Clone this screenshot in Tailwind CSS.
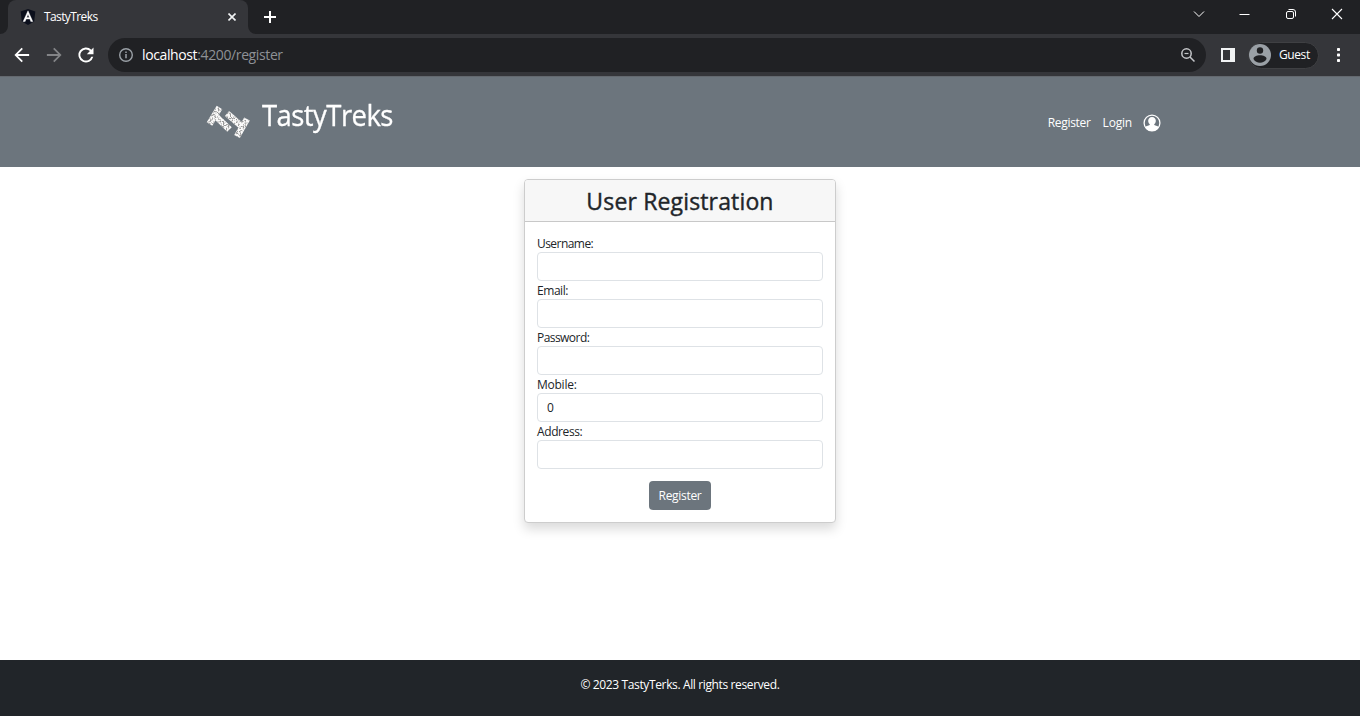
<!DOCTYPE html>
<html lang="en">
<head>
<meta charset="utf-8">
<title>TastyTreks</title>
<script src="https://cdn.jsdelivr.net/npm/@tailwindcss/browser@4"></script>
</head>
<body class="flex h-[716px] w-[1360px] flex-col overflow-hidden bg-white font-['Open_Sans','Noto_Sans',sans-serif] text-[12px] leading-[18px] text-[#212529]">
  <div class="flex h-[34px] shrink-0 bg-[#202124] text-white">
    <div class="relative ml-2 flex w-60 items-center rounded-t-lg bg-[#35363a] pl-3 pr-2.5">
      <svg class="absolute -left-2 bottom-0 size-2" viewBox="0 0 8 8"><path d="M8 0v8H0a8 8 0 0 0 8-8" fill="#35363a"/></svg>
      <svg class="absolute -right-2 bottom-0 size-2" viewBox="0 0 8 8"><path d="M0 0v8h8a8 8 0 0 1-8-8" fill="#35363a"/></svg>
      <svg class="size-4" viewBox="0 0 16 16"><path d="M8 0l7.3 2.6-1.1 10L8 16l-6.2-3.4-1.1-10z" fill="#0b0f1c"/><path fill-rule="evenodd" d="M8 1.8l4.8 10.8h-2L9.9 10H6.1l-1 2.6h-2zM8 5.3L6.7 8.500h2.600z" fill="#fff" stroke="#fff" stroke-width=".4"/></svg>
      <span class="ml-2 text-[12px] tracking-[-0.6px]">TastyTreks</span>
      <svg class="ml-auto mr-[2px] size-2" viewBox="0 0 8 8"><path d="M.5.5l7 7m0-7l-7 7" stroke="#f1f3f4" stroke-width="1.6"/></svg>
    </div>
    <svg class="ml-4 mt-[11px] size-3" viewBox="0 0 12 12"><path d="M6 0v12M0 6h12" stroke="#fff" stroke-width="2"/></svg>
    <div class="ml-auto mr-[17px] mt-2 flex h-3 items-center">
      <svg class="mr-[34px] h-3 w-3" viewBox="0 0 12 12"><path d="M1 3.500l5 5 5-5" fill="none" stroke="#fff"/></svg>
      <svg class="mr-[35px] h-3 w-[11px]" viewBox="0 0 11 12"><path d="M.5 6.500h10" stroke="#fff"/></svg>
      <svg class="mr-[34px] size-3" viewBox="0 0 12 12"><rect x="1.500" y="3.500" width="7" height="7" rx="1.500" fill="none" stroke="#fff"/><path d="M3.500 1.500h4.500a2.500 2.500 0 0 1 2.500 2.500v4.500" fill="none" stroke="#fff"/></svg>
      <svg class="size-3" viewBox="0 0 12 12"><path d="M1 1l10 10m0-10L1 11" stroke="#fff" stroke-width="1.100"/></svg>
    </div>
  </div>
  <div class="flex h-[42px] shrink-0 items-center bg-[#35363a] pl-[13px] pr-[12px]">
    <svg class="size-[18px]" viewBox="0 0 24 24" fill="#fff"><path d="M21.500 10.800H6.500l6.700-6.700L11.500 2.400 1.900 12l9.600 9.600 1.700-1.700-6.700-6.700h15z"/></svg>
    <svg class="ml-[14px] size-[18px] rotate-180" viewBox="0 0 24 24" fill="#838487"><path d="M21.500 10.800H6.500l6.700-6.700L11.500 2.400 1.900 12l9.600 9.600 1.700-1.700-6.700-6.700h15z"/></svg>
    <svg class="ml-[13px] size-5" viewBox="0 0 24 24" fill="#fff"><path d="M18.400 5.600A9 9 0 1 0 20.700 14h-2.400A6.700 6.700 0 1 1 16.700 7.300L13 11h8V3z"/></svg>
    <div class="ml-3 flex h-[34px] w-[1098px] items-center rounded-full bg-[#202124] pl-2.5 pr-2.5">
      <svg class="size-4" viewBox="0 0 16 16"><circle cx="8" cy="8" r="6.300" fill="none" stroke="#9aa0a6" stroke-width="1.400"/><path d="M8 7v4.300M8 4.500v1.500" stroke="#9aa0a6" stroke-width="1.500"/></svg>
      <span class="ml-2 text-[14px] tracking-[-0.38px] text-[#8e9196]"><span class="text-white">localhost</span>:4200/register</span>
      <svg class="ml-auto size-4" viewBox="0 0 16 16" fill="none" stroke="#c4c6c9" stroke-width="1.500"><circle cx="6.500" cy="6.500" r="4.700"/><path d="M10 10l4.500 4.500"/><path d="M4.500 6.500h4" stroke-width="1.200"/></svg>
    </div>
    <svg class="ml-[15px] h-[14px] w-[14px]" viewBox="0 0 14 14"><path fill-rule="evenodd" d="M0 0h14v14H0zM2 2v10h7V2z" fill="#f1f3f4"/></svg>
    <div class="ml-[13px] flex h-[27px] w-[71px] items-center rounded-full border border-[#3f4043] bg-[#202124] text-white">
      <svg class="size-[22px]" viewBox="0 0 22 22"><circle cx="11" cy="11" r="11" fill="#9aa0a6"/><circle cx="11" cy="6.500" r="3.200" fill="#202124"/><path d="M4.500 15c0-5 13-5 13 0-2.500 5-10.500 5-13 0" fill="#202124"/></svg>
      <span class="ml-[8px] text-[12px] tracking-[-0.4px]">Guest</span>
    </div>
    <svg class="ml-auto mr-[8px] h-4 w-[3px]" viewBox="0 0 3 16" fill="#fff"><rect y="1" width="3" height="3" rx=".7"/><rect y="6.500" width="3" height="3" rx=".7"/><rect y="12" width="3" height="3" rx=".7"/></svg>
  </div>
  <header class="flex h-[91px] shrink-0 border-t border-[#64696f] bg-[#6c757d] pl-[200px] pr-[199px] text-white">
    <svg class="mt-[21px] h-[46px] w-[56px]" viewBox="0 0 56 46">
      <filter id="speckle" filterUnits="userSpaceOnUse" x="0" y="0" width="56" height="46" color-interpolation-filters="sRGB"><feTurbulence type="fractalNoise" baseFrequency=".6" numOctaves="2" seed="4"/><feColorMatrix values="0 0 0 0 .6  0 0 0 0 .6  0 0 0 0 .6  5 0 0 0 -2.300"/><feComposite in2="SourceGraphic" operator="in" result="s"/><feMerge><feMergeNode in="SourceGraphic"/><feMergeNode in="s"/></feMerge></filter>
      <g filter="url(#speckle)" fill="none" stroke="#fafafa" stroke-width="6.500"><path d="M19.500 9.500L9.500 26M14.500 17L29.500 31.500M27 15.500L42 28.500M47 21L37 38.500"/></g>
    </svg>
    <h1 class="ml-[6px] mt-[20px] origin-left scale-x-[.916] text-[30px] leading-[36px] tracking-[-0.6px] [-webkit-text-stroke:0.3px_white]">TastyTreks</h1>
    <nav class="ml-auto mt-[37px] flex h-[18px] items-center">
      <a class="tracking-[-0.3px]">Register</a>
      <a class="ml-3 tracking-[-0.2px]">Login</a>
      <svg class="ml-[11px] size-[18px]" viewBox="0 0 18 18"><circle cx="9" cy="9" r="7.900" fill="none" stroke="#fff" stroke-width="1.300"/><path d="M9 3a3.900 3.900 0 0 0-3.800 4.300c.2 1.500.9 2.500 1.700 3.200-.4 1.200-3.700 1.200-4.700 2.700 3.200 5 10.400 5 13.600 0-1-1.500-4.300-1.500-4.700-2.700.8-.7 1.500-1.700 1.700-3.200A3.900 3.900 0 0 0 9 3" fill="#fff"/></svg>
    </nav>
  </header>
  <main class="flex flex-1 items-start justify-center pt-3">
    <form class="h-[344px] w-[312px] rounded border border-[#cdcdcd] bg-white shadow-[0_6px_12px_rgba(0,0,0,0.15)]">
      <h2 class="h-[42px] rounded-t-[3px] border-b border-[#c8c8c8] bg-[#f7f7f7] pt-[7px] text-center text-[23px] font-medium leading-[29px] tracking-[0.15px] [-webkit-text-stroke:0.4px_#212529]">User Registration</h2>
      <div class="flex flex-col px-3 pt-3">
        <label class="h-[18px] leading-[20px] tracking-[-0.55px]">Username:</label>
        <input class="h-[29px] rounded border border-[#dee2e6] px-[9px]">
        <label class="h-[18px] leading-[20px] tracking-[-0.45px]">Email:</label>
        <input class="h-[29px] rounded border border-[#dee2e6] px-[9px]">
        <label class="h-[18px] leading-[20px] tracking-[-0.55px]">Password:</label>
        <input class="h-[29px] rounded border border-[#dee2e6] px-[9px]">
        <label class="h-[18px] leading-[20px] tracking-[-0.25px]">Mobile:</label>
        <input class="h-[29px] rounded border border-[#dee2e6] px-[9px]" value="0">
        <label class="h-[18px] leading-[20px] tracking-[-0.4px]">Address:</label>
        <input class="h-[29px] rounded border border-[#dee2e6] px-[9px]">
        <button type="button" class="mt-3 h-[29px] w-[62px] self-center rounded bg-[#6c757d] tracking-[-0.3px] text-white">Register</button>
      </div>
    </form>
  </main>
  <footer class="h-[56px] shrink-0 bg-[#212529] pt-4 text-center text-white"><span class="tracking-[-0.37px]">© 2023 TastyTerks. All rights reserved.</span></footer>
</body>
</html>
